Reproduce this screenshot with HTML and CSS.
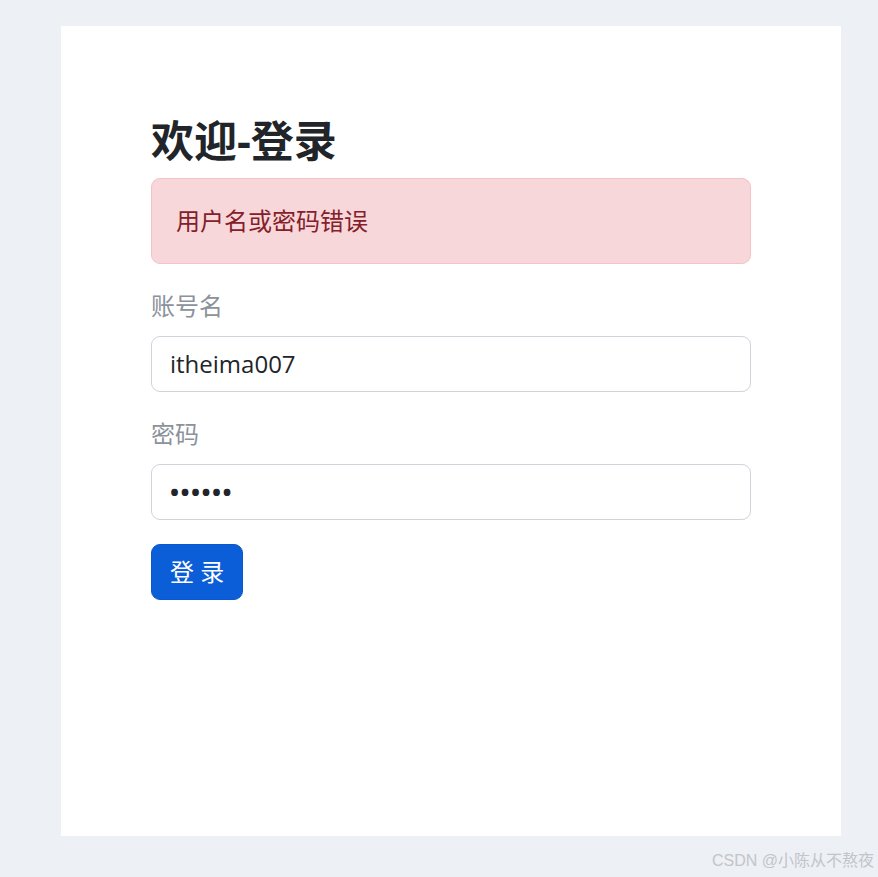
FILE: index.html
```html
<!DOCTYPE html>
<html lang="zh-CN">
<head>
  <meta charset="UTF-8">
  <meta name="viewport" content="width=device-width, initial-scale=1.0">
  <title>欢迎-登录</title>
  <link rel="stylesheet" href="styles.css">
</head>
<body>
  <div class="page">
    <div class="card">
      <h3 class="title">欢迎-登录</h3>

      <div class="alert alert-danger">用户名或密码错误</div>

      <form class="login-form">
        <div class="form-group">
          <label class="form-label" for="username">账号名</label>
          <input class="form-control" type="text" id="username" value="itheima007">
        </div>

        <div class="form-group">
          <label class="form-label" for="password">密码</label>
          <input class="form-control password" type="password" id="password" value="123456">
        </div>

        <button type="button" class="btn btn-primary">登 录</button>
      </form>
    </div>
  </div>

  <div class="watermark">CSDN @小陈从不熬夜</div>
</body>
</html>
```

FILE: styles.css
```css
body {
  margin: 0;
  background-color: #edf0f5;
  font-family: "Open Sans", "Noto Sans CJK SC", sans-serif;
  font-size: 24px;
  line-height: 1.5;
  color: #212529;
}

.page {
  padding-top: 26px;
  padding-left: 61px;
  height: 851px;
}

.card {
  box-sizing: border-box;
  width: 780px;
  height: 810px;
  padding: 90px;
  background-color: white;
}

.title {
  margin: 0 0 12px 0;
  font-size: 43px;
  font-weight: bold;
  line-height: 50px;
}

.alert {
  padding: 24px;
  margin-bottom: 24px;
  border: 1px solid #f5c2c7;
  border-radius: 9px;
}

.alert-danger {
  background-color: #f8d7da;
  color: #842029;
}

.form-group {
  margin-bottom: 24px;
}

.form-label {
  display: block;
  margin-bottom: 12px;
  color: #8b929a;
}

.form-control {
  display: block;
  box-sizing: border-box;
  width: 100%;
  padding: 9px 18px;
  font-family: inherit;
  font-size: 24px;
  line-height: 1.5;
  color: #212529;
  background-color: white;
  border: 1px solid #ced4da;
  border-radius: 9px;
  outline: none;
}

.form-control.password {
  font-weight: bold;
  letter-spacing: 1.5px;
}

.btn {
  padding: 9px 18px;
  font-family: inherit;
  font-size: 24px;
  line-height: 1.5;
  border: 1px solid transparent;
  border-radius: 9px;
  cursor: pointer;
}

.btn-primary {
  background-color: #0b5ed7;
  border-color: #0a58ca;
  color: white;
}

.watermark {
  position: absolute;
  right: 4px;
  top: 850px;
  font-family: "Liberation Sans", "Noto Sans CJK SC", sans-serif;
  font-size: 16px;
  line-height: 22px;
  color: #c3c5c9;
}
```
